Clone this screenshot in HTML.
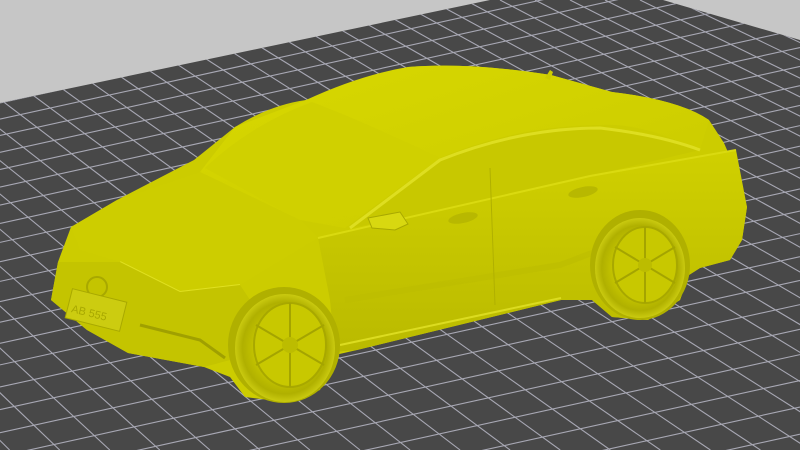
<!DOCTYPE html>
<html><head><meta charset="utf-8"><style>
html,body{margin:0;padding:0;width:800px;height:450px;overflow:hidden;background:#c6c6c6;position:relative}
svg{display:block;position:absolute;left:0;top:0}
</style></head><body>
<svg id="s" width="800" height="450" viewBox="0 0 800 450" xmlns="http://www.w3.org/2000/svg">
<defs>
<clipPath id="pl"><polygon points="0,103 490,0 663,0 800,40 800,450 0,450"/></clipPath>
<linearGradient id="side" x1="0" y1="0" x2="0" y2="1">
<stop offset="0" stop-color="#d0d000"/><stop offset="1" stop-color="#baba00"/></linearGradient>
<linearGradient id="roof" x1="0" y1="0" x2="1" y2="1">
<stop offset="0" stop-color="#d8d800"/><stop offset="1" stop-color="#caca00"/></linearGradient>
<radialGradient id="wh" cx="0.5" cy="0.5" r="0.5">
<stop offset="0.6" stop-color="#c4c400"/><stop offset="0.85" stop-color="#b0b000"/><stop offset="1" stop-color="#caca10"/></radialGradient>
</defs>
<rect width="800" height="450" fill="#c6c6c6"/>
<polygon points="0,103 490,0 663,0 800,40 800,450 0,450" fill="#484848"/>
<g id="grid" clip-path="url(#pl)" stroke="#a8a8b4" stroke-width="1.1"></g>

<path d="M408,67 Q470,62 551,75 L612,92 Q680,100 709,120 L724,143 L740,180 L747,207 L742,240 L730,260 L700,268 L689,275 L680,300 L648,320 L612,317 L592,300 L561,300 L357,350 L335,355 L320,390 L286,402 L245,397 L230,377 L204,367 L128,353 L87,330 L51,300 L58,262 L71,227 L117,200 L194,160 L235,127 Q270,105 306,100 Z" fill="#cccc00"/>
<path d="M306,100 Q360,75 408,67 Q470,62 551,75 L612,92 Q680,100 709,120 L700,150 Q640,122 600,125 Q520,125 440,158 L345,228 L300,220 L200,172 L235,127 Z" fill="url(#roof)"/>
<path d="M205,168 Q250,125 312,102 Q360,120 440,158 L360,215 L300,220 Z" fill="#d0d000"/>
<path d="M350,228 L440,160 Q520,128 600,128 Q660,135 700,150 L590,176 L420,215 Z" fill="#c8c800"/>
<path d="M350,228 L440,160 Q520,128 600,128 Q660,135 700,150" fill="none" stroke="#dede20" stroke-width="3"/>
<path d="M318,238 L420,215 L590,176 L736,150 L747,207 L742,240 L730,260 L700,268 L689,275 L680,300 L648,320 L612,317 L592,300 L561,300 L357,350 L335,352 L330,300 Z" fill="url(#side)"/>
<path d="M71,227 L117,200 L200,172 L300,220 L318,238 L240,285 L180,292 L120,262 L80,250 Z" fill="#cdcd00"/>
<path d="M120,262 L180,292 L240,285" fill="none" stroke="#e0e020" stroke-width="2"/>
<path d="M58,262 L120,262 L180,292 L240,285 L250,300 L245,330 L230,360 L204,367 L128,353 L87,330 L51,300 Z" fill="#c4c400"/>
<circle cx="97" cy="287" r="10" fill="none" stroke="#a8a800" stroke-width="2"/>
<rect x="68" y="295" width="56" height="30" fill="#cccc10" stroke="#a8a800" stroke-width="1" transform="rotate(14 96 310)"/>
<text x="72" y="318" font-family="Liberation Sans, sans-serif" font-size="11" fill="#a8a800" transform="rotate(14 96 310)">AB 555</text>
<path d="M140,325 L200,340 L225,358" fill="none" stroke="#a0a000" stroke-width="3"/>
<path d="M318,238 L590,176 L736,150" fill="none" stroke="#dada10" stroke-width="2"/>
<path d="M345,300 L560,265 L600,250" fill="none" stroke="#bcbc00" stroke-width="6" opacity="0.6"/>
<path d="M340,345 L561,298" fill="none" stroke="#dcdc20" stroke-width="2"/>
<line x1="490" y1="168" x2="495" y2="305" stroke="#b0b000" stroke-width="1"/>
<path d="M368,218 L400,212 L408,224 L395,230 L372,228 Z" fill="#d8d810" stroke="#a8a800" stroke-width="1"/>
<ellipse cx="463" cy="218" rx="15" ry="5" fill="#b8b800" transform="rotate(-12 463 218)"/>
<ellipse cx="583" cy="192" rx="15" ry="5" fill="#b8b800" transform="rotate(-12 583 192)"/>
<ellipse cx="284" cy="345" rx="56" ry="58" fill="#b0b000"/>
<ellipse cx="285" cy="348" rx="50" ry="54" fill="url(#wh)"/>
<ellipse cx="290" cy="345" rx="36" ry="42" fill="#c8c800" stroke="#a8a800" stroke-width="2"/>
<g stroke="#a4a400" stroke-width="2">
<line x1="290" y1="303" x2="290" y2="387"/><line x1="256" y1="325" x2="324" y2="365"/><line x1="256" y1="365" x2="324" y2="325"/>
</g>
<circle cx="290" cy="345" r="8" fill="#bcbc00"/>
<ellipse cx="640" cy="265" rx="50" ry="55" fill="#b0b000"/>
<ellipse cx="640" cy="268" rx="45" ry="50" fill="url(#wh)"/>
<ellipse cx="645" cy="265" rx="32" ry="38" fill="#c8c800" stroke="#a8a800" stroke-width="2"/>
<g stroke="#a4a400" stroke-width="2">
<line x1="645" y1="227" x2="645" y2="303"/><line x1="615" y1="247" x2="675" y2="283"/><line x1="615" y1="283" x2="675" y2="247"/>
</g>
<circle cx="645" cy="265" r="7" fill="#bcbc00"/>
<path d="M545,78 L550,70 L553,72 L550,80 Z" fill="#cccc00"/>
</svg>
<script>
var g=document.getElementById('grid'),h='';
var a=103-16*8;
for(var i=0;i<60;i++){h+='<line x1="0" y1="'+a.toFixed(1)+'" x2="800" y2="'+(a-176).toFixed(1)+'"/>';a+=16+Math.max(0,(a-100))*0.023;if(a>800)break;}
for(var t=-900;t<1000;t+=35){var b=1.43*t+646;h+='<line x1="'+t+'" y1="0" x2="'+b.toFixed(1)+'" y2="450"/>';}
g.innerHTML=h;
</script>
</body></html>
